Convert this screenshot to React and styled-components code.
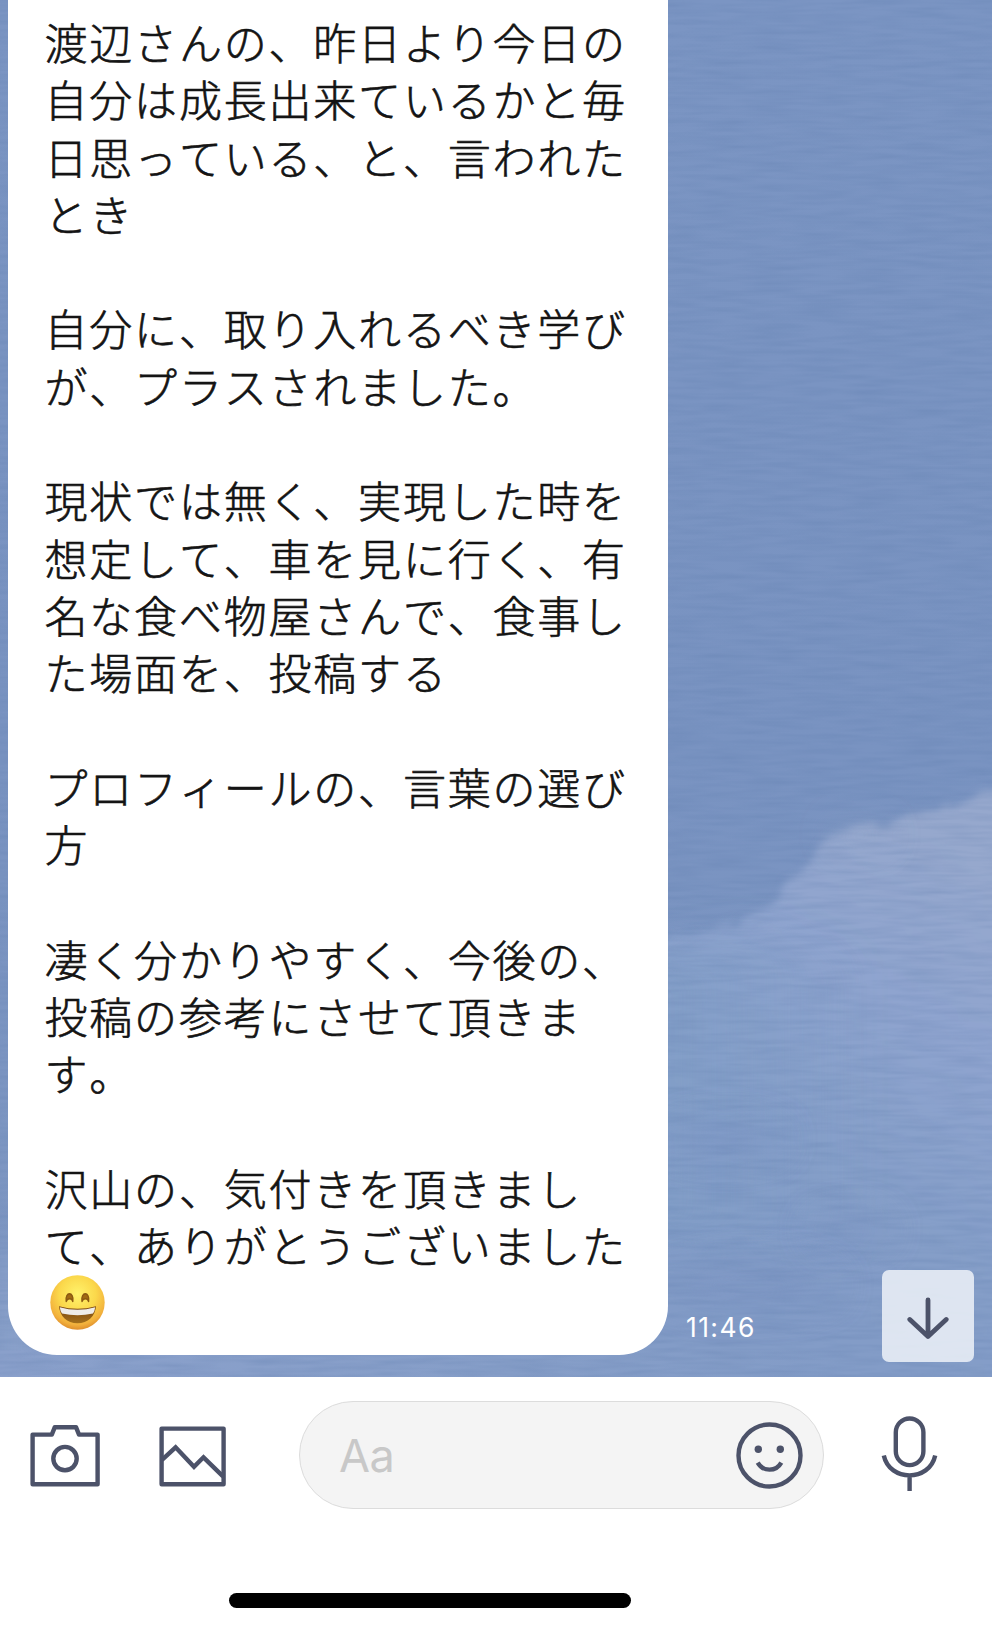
import React from 'react';
import styled, { createGlobalStyle } from 'styled-components';

const ink = '#4c5269';

const GlobalStyle = createGlobalStyle`
    * {
        box-sizing: border-box;
    }
    body {
        margin: 0;
        background: #fff;
        font-family: Inter, "Noto Sans CJK JP", sans-serif;
    }
`;

const Screen = styled.div`
    display: flex;
    flex-direction: column;
    width: 992px;
    height: 1632px;
    overflow: hidden;
`;

const ChatArea = styled.main`
    position: relative;
    display: flex;
    align-items: flex-end;
    height: 1377px;
    padding: 0 18px 22px 8px;
    background: #7b94c1;
`;

/* wallpaper sits under the messages */
const Wallpaper = styled.svg`
    position: absolute;
    inset: 0;
    width: 100%;
    height: 100%;
`;

const Bubble = styled.div`
    position: relative;
    width: 660px;
    height: 1355px;
    padding: 13px 0 0 36.5px;
    background: #fff;
    border-radius: 0 0 49px 49px;
`;

const Line = styled.p`
    display: flex;
    align-items: center;
    height: 57.3px;
    margin: 0;
    color: #141414;
    font-family: "Noto Sans CJK JP", sans-serif;
    font-size: 43px;
    font-weight: 300;
    font-kerning: none;
    line-height: 57.3px;
    letter-spacing: 1.8px;
    white-space: nowrap;
    -webkit-text-stroke: 0.65px #141414;
`;

const Emoji = styled.svg`
    width: 55px;
    height: 55px;
    margin-left: 5px;
`;

const Time = styled.time`
    position: relative;
    margin: 0 auto 12px 18px;
    color: #fff;
    font-size: 26.5px;
    line-height: 32px;
    letter-spacing: 1.4px;
`;

const ScrollButton = styled.button`
    position: relative;
    display: flex;
    align-items: center;
    justify-content: center;
    width: 92px;
    height: 92px;
    margin-bottom: -7px;
    padding: 4px 0 0;
    border: 0;
    border-radius: 7px;
    background: rgba(236, 240, 247, 0.87);
`;

const InputBar = styled.footer`
    display: flex;
    align-items: center;
    height: 156px;
    padding: 0 54px 0 29px;
    background: #fff;
`;

const IconButton = styled.button`
    display: flex;
    margin: 0 ${props => props.$gap || 0}px 0 0;
    padding: 0 0 ${props => props.$lift || 0}px;
    border: 0;
    background: none;
`;

const Icon = styled.svg`
    display: block;
    width: ${props => props.$w}px;
    height: ${props => props.$h}px;
    fill: none;
    stroke: ${ink};
    stroke-width: 4.4;
`;

const Field = styled.div`
    display: flex;
    align-items: center;
    justify-content: space-between;
    width: 525px;
    height: 108px;
    margin-right: auto;
    padding: 0 20px 0 39px;
    border: 1px solid #dcdcdc;
    border-radius: 54px;
    background: #f4f4f4;
`;

const Placeholder = styled.span`
    padding-top: 2px;
    color: #c8c8c8;
    font-size: 45px;
    line-height: 54px;
    letter-spacing: -0.5px;
`;

const HomeArea = styled.div`
    display: flex;
    align-items: flex-end;
    flex: 1;
    padding: 0 0 24px 229px;
`;

const HomeIndicator = styled.div`
    width: 402px;
    height: 15px;
    border-radius: 8px;
    background: #000;
`;

const lines = [
    '渡辺さんの、昨日より今日の',
    '自分は成長出来ているかと毎',
    '日思っている、と、言われた',
    'とき',
    '',
    '自分に、取り入れるべき学び',
    'が、プラスされました。',
    '',
    '現状では無く、実現した時を',
    '想定して、車を見に行く、有',
    '名な食べ物屋さんで、食事し',
    'た場面を、投稿する',
    '',
    'プロフィールの、言葉の選び',
    '方',
    '',
    '凄く分かりやすく、今後の、',
    '投稿の参考にさせて頂きま',
    'す。',
    '',
    '沢山の、気付きを頂きまし',
    'て、ありがとうございました',
];

const Sky = () => (
    <Wallpaper viewBox="0 0 992 1377" preserveAspectRatio="none">
        <defs>
            <linearGradient id="sky" x1="0" y1="0" x2="0" y2="1">
                <stop offset="0" stopColor="#7b95c3" />
                <stop offset="0.55" stopColor="#7993c1" />
                <stop offset="1" stopColor="#7f98c3" />
            </linearGradient>
            <linearGradient id="cloud" gradientUnits="userSpaceOnUse" x1="990" y1="860" x2="740" y2="1260">
                <stop offset="0" stopColor="#96a8cd" />
                <stop offset="0.35" stopColor="#8fa4cf" />
                <stop offset="0.7" stopColor="#869fc9" />
                <stop offset="1" stopColor="#839cc7" />
            </linearGradient>
            <linearGradient id="haze" x1="0" y1="0" x2="1" y2="0">
                <stop offset="0" stopColor="#819ec7" stopOpacity="1" />
                <stop offset="1" stopColor="#819ec7" stopOpacity="0" />
            </linearGradient>
            <linearGradient id="horizon" x1="0" y1="0" x2="1" y2="0">
                <stop offset="0" stopColor="#8aa0cb" />
                <stop offset="0.6" stopColor="#869ec8" />
                <stop offset="1" stopColor="#869ec8" stopOpacity="0" />
            </linearGradient>
            <filter id="soft" x="-20%" y="-20%" width="140%" height="140%">
                <feTurbulence type="fractalNoise" baseFrequency="0.035" numOctaves="4" seed="4" />
                <feDisplacementMap in="SourceGraphic" scale="22" xChannelSelector="R" yChannelSelector="G" />
                <feGaussianBlur stdDeviation="3.5" />
            </filter>
            <filter id="blur" x="-100%" y="-200%" width="300%" height="500%">
                <feGaussianBlur stdDeviation="18" />
            </filter>
            <filter id="grain" x="0" y="0" width="100%" height="100%" colorInterpolationFilters="sRGB">
                <feTurbulence type="fractalNoise" baseFrequency="0.02 0.2" numOctaves="2" seed="8" />
                <feColorMatrix values="0 0 0 0 0.35  0 0 0 0 0.47  0 0 0 0 0.66  0.8 0 0 0 -0.28" />
            </filter>
        </defs>
        <rect width="992" height="1377" fill="url(#sky)" />
        <path
            d="M560 940L680 938L723 924L767 905L782 884L808 872L820 844L842 830L868 821L890 829L908 817L941 804L1020 788V1460H560Z"
            fill="url(#cloud)"
            filter="url(#soft)"
        />
        <path d="M640 955L760 930L870 960V1250H640Z" fill="url(#haze)" opacity="0.7" filter="url(#blur)" />
        <ellipse cx="860" cy="835" rx="30" ry="8" fill="#98aacb" opacity="0.5" filter="url(#blur)" />
        <ellipse cx="725" cy="1140" rx="60" ry="16" fill="#7b94c5" opacity="0.6" filter="url(#blur)" />
        <ellipse cx="850" cy="1230" rx="40" ry="14" fill="#7b94c3" opacity="0.6" filter="url(#blur)" />
        <ellipse cx="750" cy="1285" rx="90" ry="22" fill="#7b94c3" opacity="0.6" filter="url(#blur)" />
        <path d="M0 1250L30 1262V1400H0Z" fill="#8fa5cd" filter="url(#blur)" />
        <rect y="1350" width="850" height="27" fill="url(#horizon)" />
        <rect width="992" height="1377" filter="url(#grain)" opacity="0.5" />
    </Wallpaper>
);

const SmileEmoji = () => (
    <Emoji viewBox="0 0 55 55" role="img" aria-label="😄">
        <defs>
            <radialGradient id="face" cx="0.5" cy="0.35" r="0.68">
                <stop offset="0" stopColor="#fff36c" />
                <stop offset="0.5" stopColor="#fbd84b" />
                <stop offset="0.82" stopColor="#f2b03c" />
                <stop offset="1" stopColor="#d98427" />
            </radialGradient>
            <linearGradient id="mouth" x1="0" y1="0" x2="0" y2="1">
                <stop offset="0" stopColor="#76420f" />
                <stop offset="1" stopColor="#a4701c" />
            </linearGradient>
        </defs>
        <circle cx="27.5" cy="27.5" r="27.2" fill="url(#face)" />
        <path d="M16.2 26.5C14.6 16.2 24.4 16.2 22.8 26.5C21.8 22.8 17.6 22.8 16.2 26.5Z" fill="#a16a12" stroke="#8b5911" strokeWidth="1.4" strokeLinejoin="round" />
        <path d="M32 26.5C30.4 16.2 40.2 16.2 38.6 26.5C37.6 22.8 33.4 22.8 32 26.5Z" fill="#a16a12" stroke="#8b5911" strokeWidth="1.4" strokeLinejoin="round" />
        <path d="M9 31.2Q27.5 36.2 46 31.2C45.3 41 38 48.3 27.5 48.3S9.7 41 9 31.2Z" fill="url(#mouth)" />
        <path d="M9.8 32.2Q27.5 37.2 45.2 32.2Q44.8 36 43 38.4Q27.5 42 12 38.4Q10.2 36 9.8 32.2Z" fill="#eeece9" />
    </Emoji>
);

const App = () => {
    return (
        <>
            <GlobalStyle />
            <Screen>
                <ChatArea>
                    <Sky />
                    <Bubble>
                        {lines.map((text, i) => <Line key={i}>{text}</Line>)}
                        <Line><SmileEmoji /></Line>
                    </Bubble>
                    <Time>11:46</Time>
                    <ScrollButton aria-label="scroll down">
                        <Icon $w={42} $h={43} viewBox="0 0 42 43" strokeLinecap="round" strokeLinejoin="round">
                            <path d="M21 3V39.5M2.8 22.5L21 39.5L39.2 22.5" strokeWidth="4.8" />
                        </Icon>
                    </ScrollButton>
                </ChatArea>
                <InputBar>
                    <IconButton $gap={58} aria-label="camera">
                        <Icon $w={72} $h={64} viewBox="0 -0.8 72 64" strokeLinejoin="round">
                            <path d="M3.6 10.8H22.8L25.8 3.4H47L50 10.8H68.6V60.4H3.6Z" />
                            <circle cx="36" cy="34.8" r="11.7" />
                        </Icon>
                    </IconButton>
                    <IconButton $gap={71} aria-label="photo">
                        <Icon $w={69} $h={64} viewBox="0 -0.8 69 64" strokeLinejoin="round">
                            <path d="M2.6 4.8H64.6V60.4H2.6Z" />
                            <path d="M3 36L16.6 23.5L35 43L44.5 33.5L64 52.5" strokeLinejoin="miter" />
                        </Icon>
                    </IconButton>
                    <Field>
                        <Placeholder>Aa</Placeholder>
                        <IconButton aria-label="sticker">
                            <Icon $w={67} $h={67} viewBox="0 0 67 67">
                                <circle cx="33.5" cy="33.5" r="31" />
                                <circle cx="22.3" cy="27.3" r="3.7" fill={ink} stroke="none" />
                                <circle cx="44.3" cy="27.3" r="3.7" fill={ink} stroke="none" />
                                <path d="M21.7 40.6C27 50 40 50 45.3 40.6" />
                            </Icon>
                        </IconButton>
                    </Field>
                    <IconButton $lift={3} aria-label="voice">
                        <Icon $w={57} $h={76} viewBox="0 0 57 76">
                            <rect x="14.8" y="2.5" width="27.6" height="46.6" rx="13.8" />
                            <path d="M2.8 39.5C8.5 66 48.5 66 54.2 39.5M28.6 59.5V75" />
                        </Icon>
                    </IconButton>
                </InputBar>
                <HomeArea>
                    <HomeIndicator />
                </HomeArea>
            </Screen>
        </>
    );
};

export default App;
